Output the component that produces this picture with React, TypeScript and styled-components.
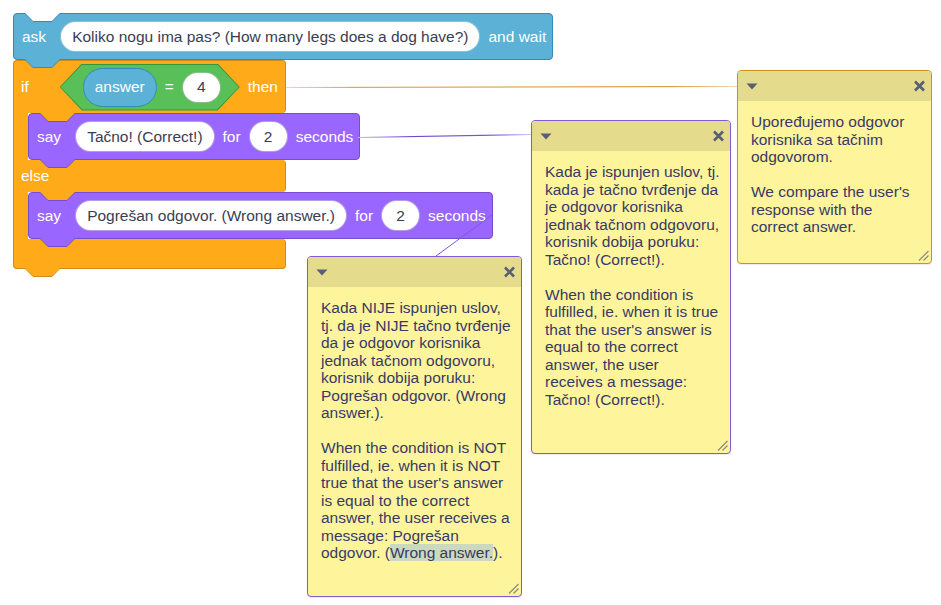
import React from "react";
import styled, { createGlobalStyle } from "styled-components";

const C = {
  looks: "#9966FF",
  looksDark: "#774DCB",
  control: "#FFAB19",
  controlDark: "#CF8B17",
  sensing: "#5CB1D6",
  sensingDark: "#2E8EB8",
  operators: "#59C059",
  operatorsDark: "#389438",
  inputText: "#3a3d52",
  noteText: "#383a66",
  noteBody: "#FEF49C",
  noteBar: "#E4DB8C",
  noteIcon: "#575E75",
};

const BLOCK_FONT = "15.5px";

const GlobalStyle = createGlobalStyle`
  html, body { margin: 0; padding: 0; background: #fff; }
  body { font-family: "Liberation Sans", Arial, Helvetica, sans-serif; }
`;

const Canvas = styled.div`
  position: relative;
  width: 941px;
  height: 605px;
  overflow: hidden;
  background: #fff;
`;

const Script = styled.div`
  position: absolute;
  left: 13px;
  top: 13px;
  display: flex;
  flex-direction: column;
  align-items: flex-start;
`;

const StackBlock = styled.div<{ $bg: string; $edge: string }>`
  position: relative;
  display: flex;
  align-items: center;
  gap: 8px;
  box-sizing: border-box;
  height: 47px;
  padding: 0 6px 0 8px;
  background: ${(p) => p.$bg};
  border: 1px solid ${(p) => p.$edge};
  border-radius: 4px;
  flex-shrink: 0;
  width: max-content;
  color: #fff;
  font-size: ${BLOCK_FONT};
`;

const Label = styled.span<{ $mr?: number }>`
  color: #fff;
  font-size: ${BLOCK_FONT};
  white-space: nowrap;
  margin-right: ${(p) => p.$mr ?? 0}px;
`;

const TextField = styled.span<{ $edge: string }>`
  display: inline-flex;
  align-items: center;
  box-sizing: border-box;
  height: 31px;
  padding: 0 11px;
  border-radius: 16px;
  background: #fff;
  border: 1px solid ${(p) => p.$edge};
  color: ${C.inputText};
  font-size: ${BLOCK_FONT};
  white-space: nowrap;
`;

const NumberField = styled(TextField)`
  min-width: 39px;
  justify-content: center;
  padding: 0 8px;
`;

const Reporter = styled.span`
  display: inline-flex;
  align-items: center;
  box-sizing: border-box;
  height: 39px;
  padding: 0 11px;
  border-radius: 20px;
  background: ${C.sensing};
  border: 1px solid ${C.sensingDark};
  color: #fff;
  font-size: ${BLOCK_FONT};
`;

const Hexagon = styled.div`
  position: relative;
  display: flex;
  align-items: center;
  gap: 8px;
  box-sizing: border-box;
  width: 180px;
  height: 47px;
  padding: 0 19px 0 23px;
  background: ${C.operatorsDark};
  clip-path: polygon(22px 0, calc(100% - 22px) 0, 100% 50%, calc(100% - 22px) 100%, 22px 100%, 0 50%);
  &::before {
    content: "";
    position: absolute;
    inset: 1px;
    background: ${C.operators};
    clip-path: polygon(21.5px 0, calc(100% - 21.5px) 0, 100% 50%, calc(100% - 21.5px) 100%, 21.5px 100%, 0 50%);
  }
  & > * {
    position: relative;
    z-index: 1;
  }
`;

const CBlock = styled.div`
  position: relative;
  display: flex;
  flex-direction: column;
  width: 273px;
`;

const Arm = styled.div<{ $kind: "top" | "middle" | "bottom"; $h: number }>`
  position: relative;
  display: flex;
  align-items: center;
  gap: 8px;
  box-sizing: border-box;
  height: ${(p) => p.$h}px;
  padding: 0 7px;
  background: ${C.control};
  border-left: 1px solid ${C.controlDark};
  border-right: 1px solid ${C.controlDark};
  border-top: ${(p) => (p.$kind === "top" ? `1px solid ${C.controlDark}` : "none")};
  border-bottom: ${(p) => (p.$kind === "bottom" ? `1px solid ${C.controlDark}` : "none")};
  border-radius: ${(p) =>
    p.$kind === "top" ? "4px 4px 4px 0" : p.$kind === "middle" ? "0 4px 4px 0" : "0 4px 4px 4px"};
`;

const Mouth = styled.div`
  display: flex;
  align-items: stretch;
`;

const Spine = styled.div`
  box-sizing: border-box;
  width: 15px;
  flex-shrink: 0;
  background: ${C.control};
  border-left: 1px solid ${C.controlDark};
`;

const NotchSvg = styled.svg<{ $side: "top" | "bottom" }>`
  position: absolute;
  left: 11px;
  top: ${(p) => (p.$side === "top" ? "-1px" : "100%")};
  width: 36px;
  height: 10px;
  overflow: visible;
  z-index: ${(p) => (p.$side === "top" ? 1 : 3)};
`;

function Notch({ side, fill, edge }: { side: "top" | "bottom"; fill: string; edge: string }) {
  return (
    <NotchSvg $side={side} viewBox="0 0 36 10">
      <polygon points="0,0 8,8.5 27,8.5 35,0" fill={fill} />
      <polyline points="0,0.5 8,8.5 27,8.5 35,0.5" fill="none" stroke={edge} strokeWidth="1" />
    </NotchSvg>
  );
}

const Connectors = styled.svg`
  position: absolute;
  left: 0;
  top: 0;
  width: 941px;
  height: 605px;
  pointer-events: none;
`;

const Comment = styled.div<{ $x: number; $y: number; $w: number; $h: number; $edge: string }>`
  position: absolute;
  left: ${(p) => p.$x}px;
  top: ${(p) => p.$y}px;
  width: ${(p) => p.$w}px;
  height: ${(p) => p.$h}px;
  box-sizing: border-box;
  display: flex;
  flex-direction: column;
  background: ${C.noteBody};
  border: 1px solid ${(p) => p.$edge};
  border-radius: 4px;
  overflow: hidden;
  box-shadow: 0 1px 1px rgba(0, 0, 0, 0.08);
`;

const CommentBar = styled.div`
  flex-shrink: 0;
  height: 30px;
  display: flex;
  align-items: center;
  justify-content: space-between;
  padding: 0 5px 0 8px;
  background: ${C.noteBar};
`;

const CommentBody = styled.div`
  flex: 1;
  padding: 12px 6px 0 13px;
  font-size: 15.5px;
  line-height: 17.5px;
  color: ${C.noteText};
  white-space: pre;
`;

const Highlight = styled.mark`
  color: inherit;
  background: #cbd9bf;
`;

const ResizeGrip = styled.svg`
  position: absolute;
  right: 2px;
  bottom: 2px;
  width: 11px;
  height: 11px;
`;

function CommentHead() {
  return (
    <CommentBar>
      <svg width="12" height="7" viewBox="0 0 12 7">
        <polygon points="0.5,0.5 11.5,0.5 6,6.5" fill={C.noteIcon} />
      </svg>
      <svg width="13" height="12" viewBox="0 0 13 12">
        <path d="M2 1.5 L11 10.5 M11 1.5 L2 10.5" stroke={C.noteIcon} strokeWidth="2.6" />
      </svg>
    </CommentBar>
  );
}

function Grip() {
  return (
    <ResizeGrip viewBox="0 0 11 11">
      <path d="M1 10.5 L10.5 1 M5.5 10.5 L10.5 5.5" stroke="#8a8a80" strokeWidth="1.2" />
    </ResizeGrip>
  );
}

export default function App() {
  return (
    <>
      <GlobalStyle />
      <Canvas>
        <Script>
          <StackBlock $bg={C.sensing} $edge={C.sensingDark}>
            <Notch side="top" fill="#ffffff" edge={C.sensingDark} />
            <Label $mr={6}>ask</Label>
            <TextField $edge="rgba(46,142,184,0.55)">Koliko nogu ima pas? (How many legs does a dog have?)</TextField>
            <Label>and wait</Label>
            <Notch side="bottom" fill={C.sensing} edge={C.sensingDark} />
          </StackBlock>

          <CBlock>
            <Arm $kind="top" $h={53}>
              <Label $mr={23}>if</Label>
              <Hexagon>
                <Reporter>answer</Reporter>
                <Label>=</Label>
                <NumberField $edge="rgba(56,148,56,0.6)">4</NumberField>
              </Hexagon>
              <Label>then</Label>
            </Arm>
            <Mouth>
              <Spine />
              <StackBlock $bg={C.looks} $edge={C.looksDark}>
                <Notch side="top" fill={C.control} edge={C.looksDark} />
                <Label $mr={6}>say</Label>
                <TextField $edge="rgba(119,77,203,0.55)">Tačno! (Correct!)</TextField>
                <Label>for</Label>
                <NumberField $edge="rgba(119,77,203,0.55)">2</NumberField>
                <Label>seconds</Label>
                <Notch side="bottom" fill={C.looks} edge={C.looksDark} />
              </StackBlock>
            </Mouth>
            <Arm $kind="middle" $h={32}>
              <Label>else</Label>
            </Arm>
            <Mouth>
              <Spine />
              <StackBlock $bg={C.looks} $edge={C.looksDark}>
                <Notch side="top" fill={C.control} edge={C.looksDark} />
                <Label $mr={6}>say</Label>
                <TextField $edge="rgba(119,77,203,0.55)">Pogrešan odgovor. (Wrong answer.)</TextField>
                <Label>for</Label>
                <NumberField $edge="rgba(119,77,203,0.55)">2</NumberField>
                <Label>seconds</Label>
                <Notch side="bottom" fill={C.looks} edge={C.looksDark} />
              </StackBlock>
            </Mouth>
            <Arm $kind="bottom" $h={30}>
              <Notch side="bottom" fill={C.control} edge={C.controlDark} />
            </Arm>
          </CBlock>
        </Script>

        <Connectors viewBox="0 0 941 605">
          <defs>
            <linearGradient id="orangeLine" x1="0" x2="1" y1="0" y2="0">
              <stop offset="0" stopColor="#f2d9a8" />
              <stop offset="0.15" stopColor="#d99a36" />
              <stop offset="0.85" stopColor="#d48f26" />
              <stop offset="1" stopColor="#efdcbc" />
            </linearGradient>
            <linearGradient id="purpleLine" x1="0" x2="1" y1="0" y2="0">
              <stop offset="0" stopColor="#c9b6ee" />
              <stop offset="0.3" stopColor="#6f48cc" />
              <stop offset="0.75" stopColor="#7b57d3" />
              <stop offset="1" stopColor="#d2c4f0" />
            </linearGradient>
          </defs>
          <path d="M286 87.5 L738 86.5" stroke="url(#orangeLine)" strokeWidth="1.1" fill="none" />
          <path d="M358 137.5 L531 134.5" stroke="url(#purpleLine)" strokeWidth="1.1" fill="none" />
          <path d="M492 215 L436 256" stroke="#7d5ad4" strokeWidth="1" fill="none" />
        </Connectors>

        <Comment $x={737} $y={70} $w={195} $h={194} $edge="#d08e2a">
          <CommentHead />
          <CommentBody>{"Upoređujemo odgovor\nkorisnika sa tačnim\nodgovorom.\n\nWe compare the user's\nresponse with the\ncorrect answer."}</CommentBody>
          <Grip />
        </Comment>

        <Comment $x={531} $y={120} $w={200} $h={334} $edge="#7f5bd6">
          <CommentHead />
          <CommentBody>
            {"Kada je ispunjen uslov, tj.\nkada je tačno tvrđenje da\nje odgovor korisnika\njednak tačnom odgovoru,\nkorisnik dobija poruku:\nTačno! (Correct!).\n\nWhen the condition is\nfulfilled, ie. when it is true\nthat the user's answer is\nequal to the correct\nanswer, the user\nreceives a message:\nTačno! (Correct!)."}
          </CommentBody>
          <Grip />
        </Comment>

        <Comment $x={307} $y={256} $w={215} $h={341} $edge="#7f5bd6">
          <CommentHead />
          <CommentBody>
            {"Kada NIJE ispunjen uslov,\ntj. da je NIJE tačno tvrđenje\nda je odgovor korisnika\njednak tačnom odgovoru,\nkorisnik dobija poruku:\nPogrešan odgovor. (Wrong\nanswer.).\n\nWhen the condition is NOT\nfulfilled, ie. when it is NOT\ntrue that the user's answer\nis equal to the correct\nanswer, the user receives a\nmessage: Pogrešan\nodgovor. ("}
            <Highlight>Wrong answer.</Highlight>
            {")."}
          </CommentBody>
          <Grip />
        </Comment>
      </Canvas>
    </>
  );
}
